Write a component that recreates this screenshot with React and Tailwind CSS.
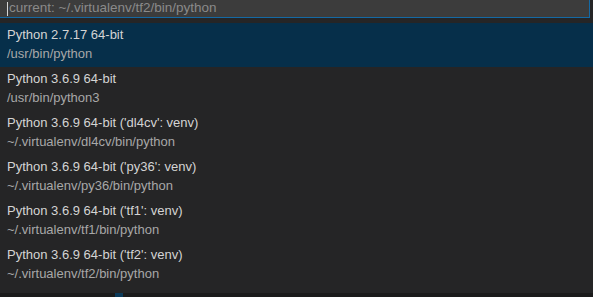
const items = [
  { label: 'Python 2.7.17 64-bit', path: '/usr/bin/python' },
  { label: 'Python 3.6.9 64-bit', path: '/usr/bin/python3' },
  { label: "Python 3.6.9 64-bit ('dl4cv': venv)", path: '~/.virtualenv/dl4cv/bin/python' },
  { label: "Python 3.6.9 64-bit ('py36': venv)", path: '~/.virtualenv/py36/bin/python' },
  { label: "Python 3.6.9 64-bit ('tf1': venv)", path: '~/.virtualenv/tf1/bin/python' },
  { label: "Python 3.6.9 64-bit ('tf2': venv)", path: '~/.virtualenv/tf2/bin/python' },
];

export default function App() {
  return (
    <div className="w-[593px] h-[297px] bg-[#252526] flex flex-col font-['Liberation_Sans',sans-serif] text-[13px] overflow-hidden">
      {/* Filter input */}
      <div className="w-[590px] h-[18px] bg-[#3c3c3c] border-r border-b border-[#1469a4] flex items-center pl-[7px] shrink-0">
        <span className="w-px h-[14px] bg-[#d4d4d4]" />
        <span className="pl-px text-[13.5px] text-[#8a8a8a] leading-none -mt-px">current: ~/.virtualenv/tf2/bin/python</span>
      </div>

      {/* Interpreter list */}
      <div className="mt-[5px] flex flex-col">
        {items.map((item, i) => (
          <div
            key={item.path}
            className={`h-[44px] pl-[7px] pt-[2px] flex flex-col ${i === 0 ? 'bg-[#062f4a]' : ''}`}
          >
            <span className="h-[19px] leading-[19px] text-[#d4d4d4]">{item.label}</span>
            <span className="h-[19px] leading-[19px] text-[#a8a8a8]">{item.path}</span>
          </div>
        ))}
      </div>

      <div className="flex-1" />
      <div className="h-[4px] bg-[#1b1b1b] shrink-0 flex">
        <span className="ml-[115px] w-[8px] h-full bg-[#0b3a5a]" />
      </div>
    </div>
  );
}
